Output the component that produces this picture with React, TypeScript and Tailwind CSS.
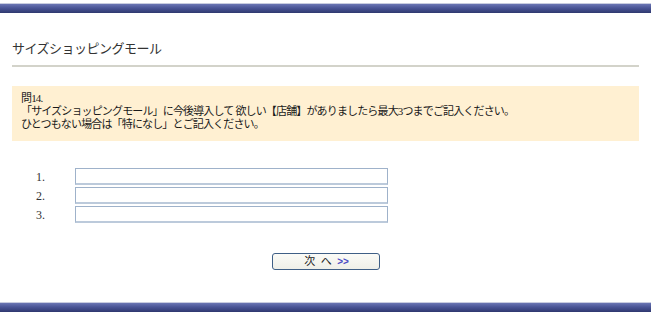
const jp = "font-['Liberation_Serif','Noto_Sans_CJK_JP',serif]";

function Bar() {
  return (
    <div className="h-[10px] w-full border-t border-[#c9cde0] bg-[linear-gradient(to_bottom,#6b76b4,#4a5596_45%,#2f386f)]" />
  );
}

export default function App() {
  const rows = ['1.', '2.', '3.'];
  return (
    <div className={`w-[651px] h-[318px] bg-white text-[#222] ${jp}`}>
      <div className="pt-[3px]">
        <Bar />
      </div>

      <div className="mx-[12px] pt-[28px] pb-[8px] border-b-2 border-[#d3d3ca]">
        <h1 className="text-[13px] leading-[16px] tracking-[-0.5px] text-[#333] font-normal">
          サイズショッピングモール
        </h1>
      </div>

      <div className="mx-[12px] mt-[19px] h-[55px] bg-[#fff0d2] pl-[9px] pt-[6px] text-[11px] leading-[13px] tracking-[-0.85px] text-[#1a1a1a]">
        <p>問14.</p>
        <p>「サイズショッピングモール」に今後導入して 欲しい【店舗】がありましたら最大3つまでご記入ください。</p>
        <p>ひとつもない場合は「特になし」とご記入ください。</p>
      </div>

      <div className="mt-[27px] flex flex-col gap-[2px]">
        {rows.map((r) => (
          <div key={r} className="flex items-center h-[17px]">
            <span className="w-[75px] pl-[36px] text-[12px] leading-[12px] text-[#333]">{r}</span>
            <input
              type="text"
              className="w-[313px] h-[17px] border border-[#9fb2ca] border-b-2 border-b-[#bccadb] bg-white outline-none"
            />
          </div>
        ))}
      </div>

      <div className="mt-[30px] flex justify-center">
        <button className="w-[108px] h-[17px] rounded-[3px] border border-[#3f5f86] bg-[linear-gradient(to_bottom,#fbfbf7,#efefe8)] text-[11px] leading-[13px] text-[#222] flex items-center justify-center pl-[2px]">
          次&nbsp;&nbsp;へ&nbsp;&nbsp;<span className="text-[#4c4cc4] font-['Liberation_Sans',sans-serif] text-[10px] font-bold">&gt;&gt;</span>
        </button>
      </div>

      <div className="mt-[32px]">
        <Bar />
      </div>
    </div>
  );
}
